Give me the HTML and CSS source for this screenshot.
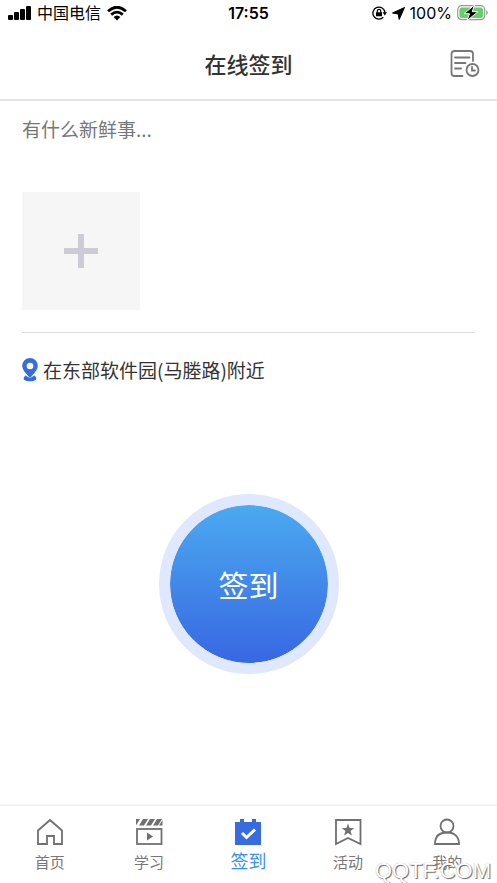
FILE: index.html
```html
<!DOCTYPE html>
<html lang="zh-CN">
<head>
<meta charset="utf-8">
<meta name="viewport" content="width=device-width, initial-scale=1">
<title>在线签到</title>
<link rel="stylesheet" href="styles.css">
</head>
<body>
<div class="status">
  <div class="status-left">
    <svg width="23" height="14" viewBox="0 0 23 14" aria-hidden="true"><rect x="0" y="9" width="5" height="5" rx="1"/><rect x="6" y="6" width="5" height="8" rx="1"/><rect x="12" y="3" width="5" height="11" rx="1"/><rect x="18" y="0" width="5" height="14" rx="1"/></svg>
    <span>中国电信</span>
    <svg class="wifi" width="20" height="15" viewBox="0 0 20 15" aria-hidden="true"><path d="M1 5.2Q10-2.8 19 5.2M4.2 8.6Q10 3.6 15.8 8.6" fill="none" stroke="#000" stroke-width="2.8"/><path d="M6.6 11Q10 8 13.4 11L10 14.6z"/></svg>
  </div>
  <time class="clock">17:55</time>
  <div class="status-right">
    <svg width="15" height="14" viewBox="0 0 15 14" aria-hidden="true"><path d="M11.3 11.2A6 6 0 1 1 12.9 6.5" fill="none" stroke="#000" stroke-width="1.3"/><path d="M10.6 6.3h4.4l-2.2 3.1zM4 6.2h6v4H4z"/><path d="M5.3 6.5V5a1.7 1.7 0 0 1 3.4 0v1.5" fill="none" stroke="#000" stroke-width="1.2"/></svg>
    <svg width="13" height="13" viewBox="0 0 13 13" aria-hidden="true"><path d="M12.5.5 7.2 12.5 6.2 7 .5 6z" stroke="#000" stroke-linejoin="round"/></svg>
    <span>100%</span>
    <svg width="32" height="18" viewBox="0 -1 32 18" aria-hidden="true"><rect x=".7" y=".7" width="27" height="14" rx="4" fill="#fff" stroke="#999" stroke-width="1.2"/><rect x="2.4" y="2.4" width="23.6" height="10.6" rx="2.5" fill="#66ce6b"/><path d="M29.3 5v5.4q3-2.7 0-5.4z" fill="#999"/><path d="M17.500 0 7 8.700h5.500l-2.500 7 11-9h-5.800z" stroke="#fff" stroke-width="1"/></svg>
  </div>
</div>

<header class="header">
  <h1>在线签到</h1>
  <button class="history" type="button" aria-label="签到记录">
    <svg width="30" height="28" viewBox="0 0 30 28" fill="none" stroke="#777" stroke-width="1.8" stroke-linecap="round" aria-hidden="true"><path d="M12.5 26H4.5Q1.5 26 1.5 23V4Q1.5 1 4.5 1H20Q23 1 23 4V11M5 7.500H19.500M5 13H15.500M5 18.500H11"/><circle cx="22.500" cy="20" r="6"/><path d="M22 17V20.500H25"/></svg>
  </button>
</header>

<main class="content">
  <textarea class="post" rows="1" aria-label="签到内容" placeholder="有什么新鲜事..."></textarea>
  <button class="add" type="button" aria-label="添加图片">
    <svg width="36" height="36" viewBox="0 0 36 36" aria-hidden="true"><path d="M15 1h6v14h14v6H21v14h-6V21H1v-6h14z" fill="#cdccd4"/></svg>
  </button>
  <div class="location">
    <svg width="16" height="24" viewBox="0 0 16 24" aria-hidden="true"><path fill-rule="evenodd" d="M8 0A7.800 7.800 0 0 0 .2 7.800C.2 12 4.500 16 8 20c3.500-4 7.800-8 7.800-12.200A7.800 7.800 0 0 0 8 0zm0 4.700a3.300 3.300 0 1 1 0 6.600 3.300 3.300 0 0 1 0-6.600z" fill="#386bdf"/><path d="M3.500 18.500Q0 22.500 8 22.500T12.500 18.500L8 21z" fill="#386bdf" stroke="#386bdf" stroke-width="1.500"/></svg>
    <span>在东部软件园(马塍路)附近</span>
  </div>
  <div class="checkin-area"><button class="checkin" type="button">签到</button></div>
</main>

<nav class="tabs">
  <a href="#home"><svg viewBox="0 0 28 28" aria-hidden="true"><path d="M2 26V12.500L14 2l12 10.500V26h-8v-8h-7v8z" fill="none" stroke="#707070" stroke-width="1.800"/></svg><span>首页</span></a>
  <a href="#study"><svg viewBox="0 0 28 28" aria-hidden="true"><rect x="2" y="11" width="24.500" height="15" fill="none" stroke="#707070" stroke-width="1.800"/><path d="M12 14.500v8l6-4zM1 1h4L1 7.500zM8 1h5L9 7.500H4zM15 1h5l-4 6.500h-5zM22 1h5l-4 6.500h-5zM27.500 2v5.500H24z" fill="#707070"/></svg><span>学习</span></a>
  <a class="active" href="#checkin" aria-current="page"><svg viewBox="0 0 28 28" aria-hidden="true"><path d="M1 4h5V1h4v3h8V1h4v3h5v23H1z" fill="#386ae0"/><path d="m8 15 4.500 4.500 8.500-8" fill="none" stroke="#fff" stroke-width="3"/></svg><span>签到</span></a>
  <a href="#events"><svg viewBox="0 0 28 28" aria-hidden="true"><path d="M2 2h24.500v24L14 20 2 26z" fill="none" stroke="#707070" stroke-width="1.800"/><path d="m14 5.500 1.600 4.400 4.700.2-3.700 2.900 1.300 4.500-3.900-2.600-3.900 2.600 1.300-4.500-3.700-2.900 4.700-.2z" fill="#707070"/></svg><span>活动</span></a>
  <a href="#me"><svg viewBox="0 0 28 28" aria-hidden="true"><g fill="none" stroke="#707070" stroke-width="1.800"><circle cx="14" cy="8" r="6.500"/><path d="M2 26c0-7 4-11.500 12-11.500S26 19 26 26z"/></g></svg><span>我的</span></a>
  <span class="watermark">QQTF.COM</span>
</nav>
</body>
</html>
```
FILE: styles.css
```css
* { box-sizing: border-box; }

body {
  display: flex;
  flex-direction: column;
  min-height: 100vh;
  margin: 0;
  background: #fff;
  color: #333;
  font-family: "Noto Sans CJK SC", sans-serif;
}

svg { display: block; flex: none; }
button { padding: 0; border: 0; cursor: pointer; font-family: inherit; }

.status {
  display: grid;
  grid-template-columns: 1fr auto 1fr;
  align-items: center;
  height: 26px;
  padding: 0 8px;
  color: #000;
  font-family: Inter, "Noto Sans CJK SC", sans-serif;
  font-size: 16px;
  line-height: 24px;
}

.status-left, .status-right { display: flex; align-items: center; gap: 6px; }
.status-right { justify-content: flex-end; gap: 5px; }
.clock { font-weight: 600; }

.header {
  display: grid;
  grid-template-columns: 1fr auto 1fr;
  align-items: center;
  height: 75px;
  padding: 0 17px;
  border-bottom: 2px solid #e4e4e4;
}

.header h1 {
  grid-column: 2;
  margin: 0;
  font-size: 22px;
  font-weight: 500;
  line-height: 32px;
}

.history { justify-self: end; padding-top: 2px; background: none; }

.content {
  display: flex;
  flex: 1;
  flex-direction: column;
  padding: 12px 22px 0;
}

.post {
  width: 100%;
  height: 79px;
  padding: 0;
  border: 0;
  outline: 0;
  resize: none;
  background: none;
  color: #333;
  font: 19px/32px "Noto Sans CJK SC", sans-serif;
}

.post::placeholder { color: #777; opacity: 1; }

.add {
  display: grid;
  place-items: center;
  width: 118px;
  height: 118px;
  background: #f6f6f7;
}

.location {
  display: flex;
  align-items: center;
  gap: 5px;
  margin-top: 22px;
  padding-top: 22px;
  border-top: 1px solid #ddd;
  font-size: 19px;
  line-height: 30px;
}

.checkin-area {
  display: grid;
  flex: 1;
  place-items: center;
  padding-bottom: 22px;
}

.checkin {
  width: 180px;
  height: 180px;
  border: 11px solid #dfe8fc;
  border-radius: 50%;
  background: linear-gradient(#4baaf0, #3867e2) padding-box;
  color: #fff;
  font-size: 30px;
}

.tabs {
  position: relative;
  display: grid;
  grid-template-columns: repeat(5, 1fr);
  height: 79px;
  border-top: 2px solid #f4f4f4;
}

.tabs a {
  display: flex;
  flex-direction: column;
  align-items: center;
  gap: 4px;
  padding-top: 12px;
  color: #777;
  font-size: 15px;
  line-height: 24px;
  text-decoration: none;
}

.tabs a svg { width: 28px; height: 28px; }
.tabs .active { gap: 2px; color: #3d91ed; font-size: 18px; }

.watermark {
  position: absolute;
  right: 6px;
  bottom: 0;
  color: #fff;
  font: 22px/24px "Liberation Sans", sans-serif;
  text-shadow: 1px 1px 1px #666, 0 0 1px #aaa;
  pointer-events: none;
}
```
